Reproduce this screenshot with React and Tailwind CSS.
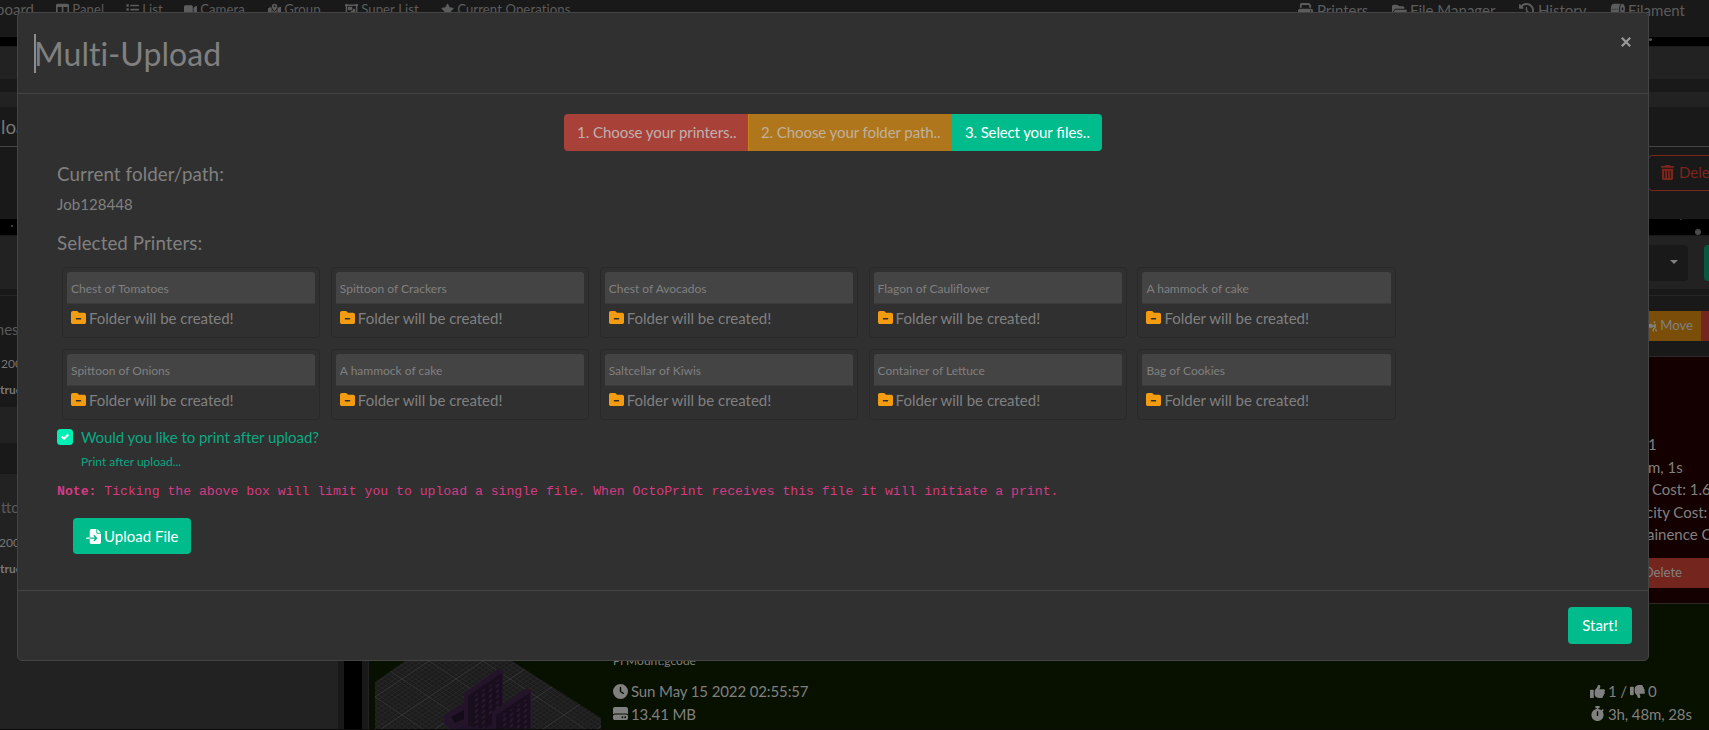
import React from "react";
import {
  FaTableColumns, FaList, FaVideo, FaMapLocationDot, FaObjectGroup, FaStar, FaPrint, FaFolderOpen,
  FaClockRotateLeft, FaTrashCan, FaPeopleCarryBox, FaFolderMinus, FaFileImport,
  FaClock, FaHardDrive, FaThumbsUp, FaThumbsDown, FaStopwatch,
} from "react-icons/fa6";
import { FaToiletPaper } from "react-icons/fa";

const PRINTERS = [
  "Chest of Tomatoes", "Spittoon of Crackers", "Chest of Avocados", "Flagon of Cauliflower",
  "A hammock of cake", "Spittoon of Onions", "A hammock of cake", "Saltcellar of Kiwis",
  "Container of Lettuce", "Bag of Cookies",
];

function NavItem({ icon: Icon, label, className }) {
  return (
    <a className={"flex shrink-0 items-center whitespace-nowrap " + className}>
      <Icon className="h-[1em] w-auto shrink-0" />
      <span>{label}</span>
    </a>
  );
}

function NavBar() {
  return (
    <nav className="flex h-[37px] shrink-0 bg-[#191919] text-[#5c5c5c]">
      <div className="-mt-0.5 flex w-[34px] shrink-0 justify-end text-[15px] leading-[22.5px]">Dashboard</div>
      <div className="flex h-[19px] flex-1 text-[13.125px] leading-[19px] tracking-[0.11px]">
        <NavItem icon={FaTableColumns} label="Panel" className="ml-[22px] w-[70px] gap-[3px]" />
        <NavItem icon={FaList} label="List" className="w-[58px] gap-[3px]" />
        <NavItem icon={FaVideo} label="Camera" className="w-[84px] gap-[3px]" />
        <NavItem icon={FaMapLocationDot} label="Group" className="w-[77px] gap-[3px]" />
        <NavItem icon={FaObjectGroup} label="Super List" className="w-[96px] gap-[3px]" />
        <NavItem icon={FaStar} label="Current Operations" className="gap-[3px]" />
      </div>
      <div className="-mt-[1px] flex h-[22px] w-[411px] shrink-0 text-[15px] leading-[22px]">
        <NavItem icon={FaPrint} label="Printers" className="w-[94px] gap-[4px]" />
        <NavItem icon={FaFolderOpen} label="File Manager" className="w-[127px] gap-[3px]" />
        <NavItem icon={FaClockRotateLeft} label="History" className="w-[91px] gap-[4px]" />
        <NavItem icon={FaToiletPaper} label="Filament" className="gap-[3px]" />
      </div>
    </nav>
  );
}

function ModelPreview() {
  const lines = [];
  for (let i = -40; i < 60; i++) {
    const stroke = i % 8 === 0 ? "#3c3c3c" : "#292929";
    lines.push(<path key={"a" + i} d={`M0 ${i * 4.5} l240 160`} stroke={stroke} strokeWidth="0.8" />);
    lines.push(<path key={"b" + i} d={`M0 ${i * 4.5} l240 -160`} stroke={stroke} strokeWidth="0.8" />);
  }
  return (
    <svg width="226" height="70" viewBox="0 0 226 70" fill="none" className="shrink-0">
      <defs>
        <clipPath id="bed"><path d="M0 21 L30 0 H137 L226 57 V70 H0Z" /></clipPath>
        <pattern id="holes" width="7" height="5.5" patternUnits="userSpaceOnUse" patternTransform="skewY(-34)">
          <rect width="7" height="5.5" fill="#180d1c" />
          <ellipse cx="3.5" cy="2.7" rx="2" ry="1.6" fill="#28182e" />
        </pattern>
      </defs>
      <g clipPath="url(#bed)">
        <rect width="226" height="70" fill="#1c1c1c" />
        {lines}
      </g>
      <path d="M69 54 L89 42 V70 H80 L69 64Z" fill="#23142a" />
      <path d="M76 56 L89 49 V58 L80 62Z" fill="#140b18" />
      <path d="M89 32 L124 7 L128 9 V50 L118 58 V70 H89Z" fill="#24142a" />
      <path d="M93 35 L127 12 V49 L118 55 V70 H93Z" fill="#190e1d" />
      <path d="M100 34 L124 18 V48 L114 56 L112 70 H98Z" fill="url(#holes)" />
      <path d="M117 51 L152 27 L156 29 V70 H117Z" fill="#24142a" />
      <path d="M121 54 L155 32 V70 H121Z" fill="#190e1d" />
      <path d="M127 54 L152 38 V70 H124Z" fill="url(#holes)" />
      <path d="M80 70 L89 64 L110 68 L118 62 V70Z" fill="#21122a" />
    </svg>
  );
}

function Backdrop() {
  return (
    <div className="flex h-full flex-col">
      <NavBar />
      <div className="h-[9px] shrink-0 bg-black pl-[1649px] pt-px">
        <div className="h-[3px] w-[3px] rounded-full bg-[#555]" />
      </div>
      <div className="h-[33px] shrink-0 border-t border-[#1b1b1b] bg-[#222]" />
      <div className="h-[13px] shrink-0 bg-[#191919]" />
      <div className="h-[15px] shrink-0 bg-[#222]" />
      <div className="h-[40px] shrink-0 border-b border-[#444] bg-[#191919] pl-px pt-[8.5px] text-[18.75px] leading-[22.5px] text-[#777]">load</div>
      <div className="flex h-[72px] shrink-0 justify-end bg-[#191919] pt-2">
        <div className="-mr-6 flex h-[36px] w-[85px] items-center gap-1 rounded border border-[#7c251c] pl-[11px] text-[15px] text-[#7c251c]">
          <FaTrashCan className="-mt-px h-[15px] w-auto" /><span className="-mt-px">Delete</span>
        </div>
      </div>
      <div className="flex h-[16px] shrink-0 justify-between bg-black">
        <div className="ml-[11px] mt-1.5 h-[2px] w-[2px] rounded-full bg-[#555]" />
        <div className="flex items-start gap-[3px] pr-2">
          <div className="mr-[10px] h-px w-[2px] bg-[#333]" />
          <div className="mt-[10px] h-[6px] w-[6px] rounded-full bg-[#4a4a4a]" />
        </div>
      </div>
      <div className="flex h-[54px] shrink-0 justify-end gap-4 border-t border-[#191919] bg-[#222] pt-[9px]">
        <div className="flex h-[36px] w-[60px] justify-end rounded bg-[#191919] pr-[10px] pt-[15px]">
          <div className="h-0 border-x-4 border-t-4 border-x-transparent border-t-[#808080]" />
        </div>
        <div className="h-[36px] w-[5px] rounded-l bg-[#08573f]" />
      </div>
      <div className="h-[7px] shrink-0 border-b border-[#252525] bg-[#191919]" />
      <div className="flex h-[434px] shrink-0">
        <div className="flex w-[338px] shrink-0 flex-col bg-[#222]">
          <div className="flex h-[111px] flex-col bg-[#191919] pt-[22px]">
            <div className="flex w-[24px] justify-end text-[15px] leading-[22.5px] text-[#5a5a5a]">Chest</div>
            <div className="mt-[14px] pl-px text-xs leading-[18px] text-[#777]">200°C</div>
            <div className="mt-2 text-xs font-bold leading-[18px] text-[#777]">truct</div>
          </div>
          <div className="h-[36px]" />
          <div className="h-[31px] bg-[#191919]" />
          <div className="flex h-[165px] flex-col pt-[22px]">
            <div className="pl-px text-[15px] leading-[22.5px] text-[#5a5a5a]">ttoon</div>
            <div className="-ml-px mt-[15px] text-xs leading-[18px] text-[#777]">200°C</div>
            <div className="mt-2 text-xs font-bold leading-[18px] text-[#777]">truct</div>
          </div>
          <div className="flex h-[22px] pl-[62px] text-[13px] leading-[22px] text-[#555]">
            <span className="w-[58px]">(</span><span className="w-[115px]">g,</span>
            <span className="w-[58px]">(</span><span>y,</span>
          </div>
        </div>
        <div className="w-[6px] shrink-0 bg-[#191919]" />
        <div className="w-[18px] shrink-0 bg-black" />
        <div className="w-[7px] shrink-0 border-r border-[#222] bg-[#191919]" />
        <div className="flex flex-1 flex-col bg-[#081000]">
          <div className="flex h-[61px] shrink-0 justify-end border-b border-[#2a2a2a] bg-[#191919] pt-[15px] text-[13.125px]">
            <div className="flex h-[30px] w-[72px] items-center justify-end gap-[3px] bg-[#7a4e09] pr-2 text-[#808080]">
              <FaPeopleCarryBox className="h-[13px] w-auto shrink-0" /><span>Move</span>
            </div>
            <div className="h-[30px] w-2 bg-[#74261e]" />
          </div>
          <div className="flex h-[247px] shrink-0 flex-col border-b border-[#2a2a2a] bg-[#150000] text-[15px] leading-[22.5px] text-[#808080]">
            <div className="ml-auto w-[61px] whitespace-nowrap pt-[76px]">
              <div className="-ml-0.5 pl-0.5">1</div>
              <div>m, 1s</div>
              <div className="pl-1">Cost: 1.62</div>
              <div className="-ml-0.5">city Cost: 0</div>
              <div className="-ml-px">ainence Cost</div>
            </div>
            <div className="mt-[12px] flex h-[30px] shrink-0 items-center justify-end bg-[#74261e] pr-[27px] text-[13.125px]">Delete</div>
          </div>
          <div className="flex h-[126px] overflow-hidden pl-[6px] pt-[57px] text-[15px] leading-[22.5px] tracking-[-0.12px] text-[#808080]">
            <ModelPreview />
            <div className="ml-3 flex-1">
              <div className="-mt-[9px] text-xs leading-[18px] tracking-normal">Pi Mount.gcode</div>
              <div className="mt-[10px] flex items-center gap-[3px]"><FaClock />Sun May 15 2022 02:55:57</div>
              <div className="flex items-center gap-[3px]"><FaHardDrive />13.41 MB</div>
            </div>
            <div className="w-[119px] pt-[19px]">
              <div className="flex items-center gap-[3px]"><FaThumbsUp />1 /<FaThumbsDown />0</div>
              <div className="flex items-center gap-[3px]"><FaStopwatch className="h-[15px] w-auto" />3h, 48m, 28s</div>
            </div>
          </div>
        </div>
      </div>
    </div>
  );
}

function PrinterCard({ name }) {
  return (
    <div className="h-[71px] rounded border border-[#292929] p-1">
      <div className="h-8 rounded-t-[3px] border-b border-[#3b3b3b] bg-[#444] pl-1 pt-[8px] text-xs leading-[18px] text-[#808080]">{name}</div>
      <div className="mt-[3px] flex items-center gap-[3px] pl-1 text-[15px] leading-[22.5px] text-[#808080]">
        <FaFolderMinus className="text-[#f39c12]" />Folder will be created!
      </div>
    </div>
  );
}

function UploadModal() {
  return (
    <div className="absolute left-[17px] top-3 flex h-[649px] w-[1632px] flex-col rounded-[5px] border border-[#444] bg-[#303030] text-[15px] leading-[22.5px] text-[#808080]">
      <div className="flex h-[81px] shrink-0 items-start justify-between border-b border-[#444] pl-4 pr-[17px] pt-[21px]">
        <h1 className="border-l-2 border-[#8c8c8c] text-[32px] leading-[39px] tracking-[0.08px] [font-variant-ligatures:none]"><span className="-ml-[2px]">Multi-Upload</span></h1>
        <button className="mt-[2.5px] flex h-[10px] w-[10px] items-center" aria-label="Close">
          <svg width="10" height="10" viewBox="0 0 10 10" fill="none" stroke="#999" strokeWidth="2.2"><path d="M0.8 0.8 9.2 9.2M9.2 0.8 0.8 9.2" /></svg>
        </button>
      </div>
      <div className="flex h-[496px] shrink-0 flex-col pl-[39px] pt-5">
        <div className="ml-[507px] flex h-[37px] leading-[37px]">
          <div className="w-[184px] rounded-l bg-[#a84239] pl-[13px] tracking-[-0.05px] text-[#c0b0ae]">1. Choose your printers..</div>
          <div className="w-[204px] border-l border-[#c98315] bg-[#b0761c] pl-3 tracking-[-0.08px] text-[#bfb19e]">2. Choose your folder path..</div>
          <div className="w-[150px] rounded-r bg-[#00bc8c] pl-[13px] text-white"><span className="tracking-[-0.14px]">3. Select your</span> files..</div>
        </div>
        <h5 className="mt-[11.5px] text-[18.75px] leading-[22.5px] tracking-[0.09px]">Current folder/path:</h5>
        <div className="mt-[7.5px] tracking-[0.08px]">Job128448</div>
        <h5 className="mt-[16.5px] text-[18.75px] leading-[22.5px] tracking-[0.07px]">Selected Printers:</h5>
        <div className="ml-[5px] mt-[12.5px] grid w-[1333.5px] grid-cols-5 gap-x-[10.75px] gap-y-[11px]">
          {PRINTERS.map((name, i) => <PrinterCard key={i} name={name} />)}
        </div>
        <div className="mt-[6px] flex items-start text-[#0aa981]">
          <div className="mt-[3px] flex h-4 w-4 items-center justify-center rounded-[3.5px] bg-[#00efb2]">
            <svg width="8" height="8" viewBox="0 0 8 8"><path fill="#fff" d="M6.564.75l-3.59 3.612-1.538-1.55L0 4.26l2.974 2.99L8 2.193z" /></svg>
          </div>
          <div className="ml-2">
            <div className="tracking-[-0.06px]">Would you like to print after upload?</div>
            <div className="mt-[5px] text-xs leading-[18px]">Print after upload...</div>
          </div>
        </div>
        <code className="mt-[11px] font-['Liberation_Mono',monospace] text-[13.125px] leading-[20px] tracking-[0.018px] text-[#d63a82]"><b>Note:</b> Ticking the above box will limit you to upload a single file. When OctoPrint receives this file it will initiate a print.</code>
        <button className="ml-4 mt-[16px] flex h-9 w-[118px] items-center gap-[3px] rounded bg-[#00bc8c] pl-[13px] text-white"><FaFileImport />Upload File</button>
      </div>
      <div className="flex flex-1 justify-end border-t border-[#444] pr-4 pt-4">
        <button className="h-[37px] w-16 rounded bg-[#00bc8c] text-white">Start!</button>
      </div>
    </div>
  );
}

export default function App() {
  return (
    <div className="relative h-[730px] w-full overflow-hidden border-b border-[#0c0c0c] bg-[#191919] font-['Lato',sans-serif]">
      <Backdrop />
      <UploadModal />
    </div>
  );
}
